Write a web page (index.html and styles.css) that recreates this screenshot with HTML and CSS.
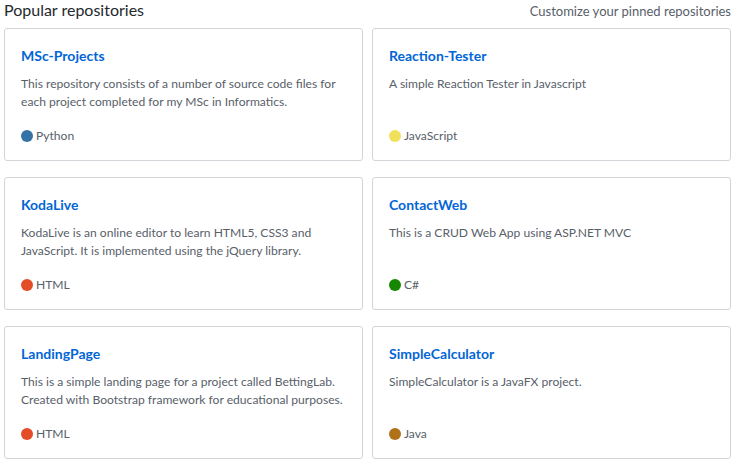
FILE: index.html
```html
<!DOCTYPE html>
<html>
<head>
<meta charset="utf-8">
<link rel="stylesheet" href="styles.css">
</head>
<body>
<div class="pinned">
  <div class="header">
    <h2 class="title">Popular repositories</h2>
    <a class="customize" href="#">Customize your pinned repositories</a>
  </div>
  <ol class="grid">
    <li class="card">
      <a class="name" href="#">MSc-Projects</a>
      <p class="desc">This repository consists of a number of source code files for each project completed for my MSc in Informatics.</p>
      <p class="lang"><span class="dot python"></span>Python</p>
    </li>
    <li class="card">
      <a class="name" href="#">Reaction-Tester</a>
      <p class="desc">A simple Reaction Tester in Javascript</p>
      <p class="lang"><span class="dot js"></span>JavaScript</p>
    </li>
    <li class="card">
      <a class="name" href="#">KodaLive</a>
      <p class="desc">KodaLive is an online editor to learn HTML5, CSS3 and JavaScript. It is implemented using the jQuery library.</p>
      <p class="lang"><span class="dot html"></span>HTML</p>
    </li>
    <li class="card">
      <a class="name" href="#">ContactWeb</a>
      <p class="desc">This is a CRUD Web App using ASP.NET MVC</p>
      <p class="lang"><span class="dot csharp"></span>C#</p>
    </li>
    <li class="card">
      <a class="name" href="#">LandingPage</a>
      <p class="desc">This is a simple landing page for a project called BettingLab. Created with Bootstrap framework for educational purposes.</p>
      <p class="lang"><span class="dot html"></span>HTML</p>
    </li>
    <li class="card">
      <a class="name" href="#">SimpleCalculator</a>
      <p class="desc">SimpleCalculator is a JavaFX project.</p>
      <p class="lang"><span class="dot java"></span>Java</p>
    </li>
  </ol>
</div>
</body>
</html>
```
FILE: styles.css
```css
html, body {
  margin: 0;
  padding: 0;
  background: #fff;
}
body {
  font-family: "Lato", "Noto Sans", sans-serif;
  color: #24292e;
}
.pinned {
  width: 727px;
  padding-left: 4px;
}
.header {
  display: flex;
  justify-content: space-between;
  align-items: baseline;
  height: 20px;
  margin-bottom: 8px;
}
.title {
  margin: 0;
  font-size: 16px;
  font-weight: 400;
  line-height: 19px;
  color: #24292e;
}
.customize {
  font-size: 13px;
  line-height: 19px;
  color: #586069;
  text-decoration: none;
}
.grid {
  list-style: none;
  margin: 0;
  padding: 0;
  display: grid;
  grid-template-columns: 359px 359px;
  column-gap: 9px;
  row-gap: 16px;
}
.card {
  display: flex;
  flex-direction: column;
  border: 1px solid #d1d5da;
  border-radius: 3px;
  padding: 16px;
}
.name {
  font-size: 14px;
  font-weight: 700;
  line-height: 21px;
  color: #0366d6;
  text-decoration: none;
}
.desc {
  flex: 1;
  margin: 9px 0 7px;
  font-size: 12.1px;
  line-height: 18px;
  color: #586069;
}
.lang {
  display: flex;
  align-items: center;
  margin: 9px 0 0;
  padding-bottom: 0;
  font-size: 12.1px;
  line-height: 17px;
  color: #586069;
}
.dot {
  width: 12px;
  height: 12px;
  border-radius: 50%;
  margin-right: 3px;
}
.python { background: #3572a5; }
.js { background: #f1e05a; }
.html { background: #e34c26; }
.csharp { background: #178600; }
.java { background: #b07219; }
```
